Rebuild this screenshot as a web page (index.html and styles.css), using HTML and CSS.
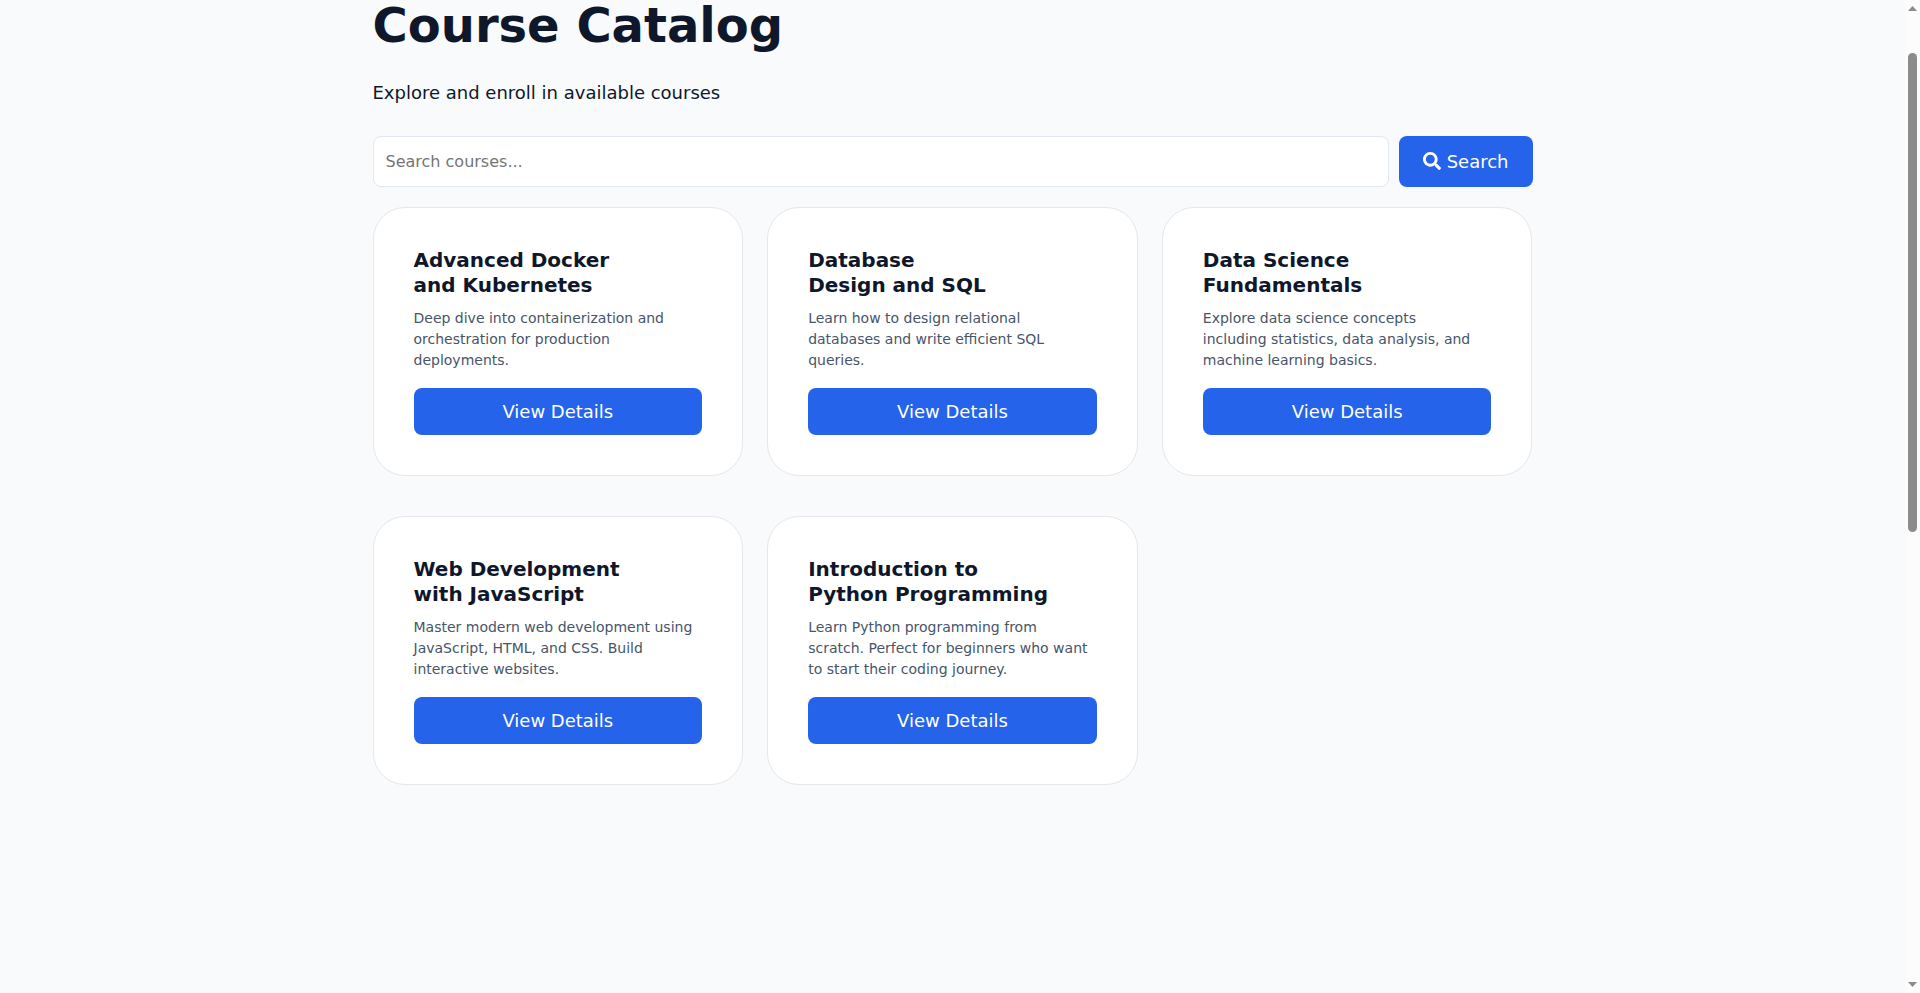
FILE: index.html
```html
<!DOCTYPE html>
<html lang="en">
<head>
<meta charset="utf-8">
<title>Course Catalog</title>
<link rel="stylesheet" href="styles.css">
</head>
<body>
<div class="viewport">
  <main class="page">
    <div class="container">
      <h1 class="title">Course Catalog</h1>
      <p class="subtitle">Explore and enroll in available courses</p>
      <form class="search">
        <input class="search-input" type="search" placeholder="Search courses..." aria-label="Search courses">
        <button class="button search-button" type="submit">
          <svg class="icon" viewBox="0 0 512 512" aria-hidden="true"><path fill="currentColor" d="M505 442.7L405.3 343c-4.5-4.5-10.6-7-17-7H372c27.6-35.3 44-79.7 44-128C416 93.1 322.9 0 208 0S0 93.1 0 208s93.1 208 208 208c48.3 0 92.7-16.4 128-44v16.3c0 6.4 2.5 12.5 7 17l99.7 99.7c9.4 9.4 24.6 9.4 33.9 0l28.3-28.3c9.4-9.4 9.4-24.6.1-34zM208 336c-70.7 0-128-57.2-128-128 0-70.7 57.2-128 128-128 70.7 0 128 57.2 128 128 0 70.7-57.2 128-128 128z"/></svg>
          Search
        </button>
      </form>
      <section class="courses" aria-label="Courses">
        <article class="card">
          <h2 class="card-title">Advanced Docker and Kubernetes</h2>
          <p class="card-text">Deep dive into containerization and orchestration for production deployments.</p>
          <a class="button" href="#docker">View Details</a>
        </article>
        <article class="card">
          <h2 class="card-title">Database Design and SQL</h2>
          <p class="card-text">Learn how to design relational databases and write efficient SQL queries.</p>
          <a class="button" href="#database">View Details</a>
        </article>
        <article class="card">
          <h2 class="card-title">Data Science Fundamentals</h2>
          <p class="card-text">Explore data science concepts<br>including statistics, data analysis, and machine learning basics.</p>
          <a class="button" href="#data-science">View Details</a>
        </article>
        <article class="card">
          <h2 class="card-title">Web Development with JavaScript</h2>
          <p class="card-text">Master modern web development using JavaScript, HTML, and CSS. Build interactive websites.</p>
          <a class="button" href="#web">View Details</a>
        </article>
        <article class="card">
          <h2 class="card-title">Introduction to Python Programming</h2>
          <p class="card-text">Learn Python programming from scratch. Perfect for beginners who want to start their coding journey.</p>
          <a class="button" href="#python">View Details</a>
        </article>
      </section>
    </div>
  </main>
  <div class="scrollbar" aria-hidden="true">
    <svg class="arrow" viewBox="0 0 9 5"><path fill="currentColor" d="M4.500 0L9 5H0z"/></svg>
    <div class="track"><div class="thumb"></div></div>
    <svg class="arrow" viewBox="0 0 9 5"><path fill="currentColor" d="M0 0H9L4.500 5z"/></svg>
  </div>
</div>
</body>
</html>
```
FILE: styles.css
```css
* {
  box-sizing: border-box;
}

body {
  margin: 0;
  background: #f8fafc;
  color: #0f172a;
  font-family: "DejaVu Sans", sans-serif;
  font-size: 18px;
  line-height: 27px;
}

.viewport {
  display: flex;
  height: 100vh;
}

.page {
  flex: 1;
}

.container {
  max-width: 1200px;
  margin: 0 auto;
  padding: 0 20px;
}

.title {
  margin: 0 0 29px;
  font-size: 48px;
  line-height: 50px;
}

.subtitle {
  margin: 0 0 30px;
}

.search {
  display: flex;
  gap: 10px;
  margin-bottom: 20px;
}

.search-input {
  flex: 1;
  min-width: 0;
  padding: 12px;
  border: 1px solid #e2e8f0;
  border-radius: 8px;
  background: #fff;
  color: inherit;
  font: 16px/24px "DejaVu Sans", sans-serif;
  appearance: none;
}

.button {
  padding: 10px 24px;
  border: 0;
  border-radius: 8px;
  background: #2563eb;
  color: #fff;
  font: inherit;
  text-align: center;
  text-decoration: none;
}

.search-button {
  padding: 12px 24px;
}

.icon {
  width: 18px;
  height: 18px;
  vertical-align: -2px;
}

.courses {
  display: grid;
  grid-template-columns: repeat(3, 1fr);
  gap: 40px 24px;
}

.card {
  display: flex;
  flex-direction: column;
  padding: 40px;
  border: 1px solid #e5e7eb;
  border-radius: 32px;
  background: #fff;
}

.card-title {
  margin: 0 0 10px;
  font-size: 20px;
  line-height: 25px;
  text-wrap: balance;
}

.card-text {
  margin: 0 0 17px;
  color: #475569;
  font-size: 14px;
  line-height: 21px;
}

.scrollbar {
  display: flex;
  flex-direction: column;
  align-items: center;
  width: 15px;
  padding: 6px 0;
  background: #fcfcfc;
  color: #8b8b8b;
}

.arrow {
  width: 9px;
  height: 5px;
}

.track {
  flex: 1;
  width: 9px;
  padding-top: 42px;
}

.thumb {
  height: 479px;
  border-radius: 5px;
  background: #8b8b8b;
}
```
